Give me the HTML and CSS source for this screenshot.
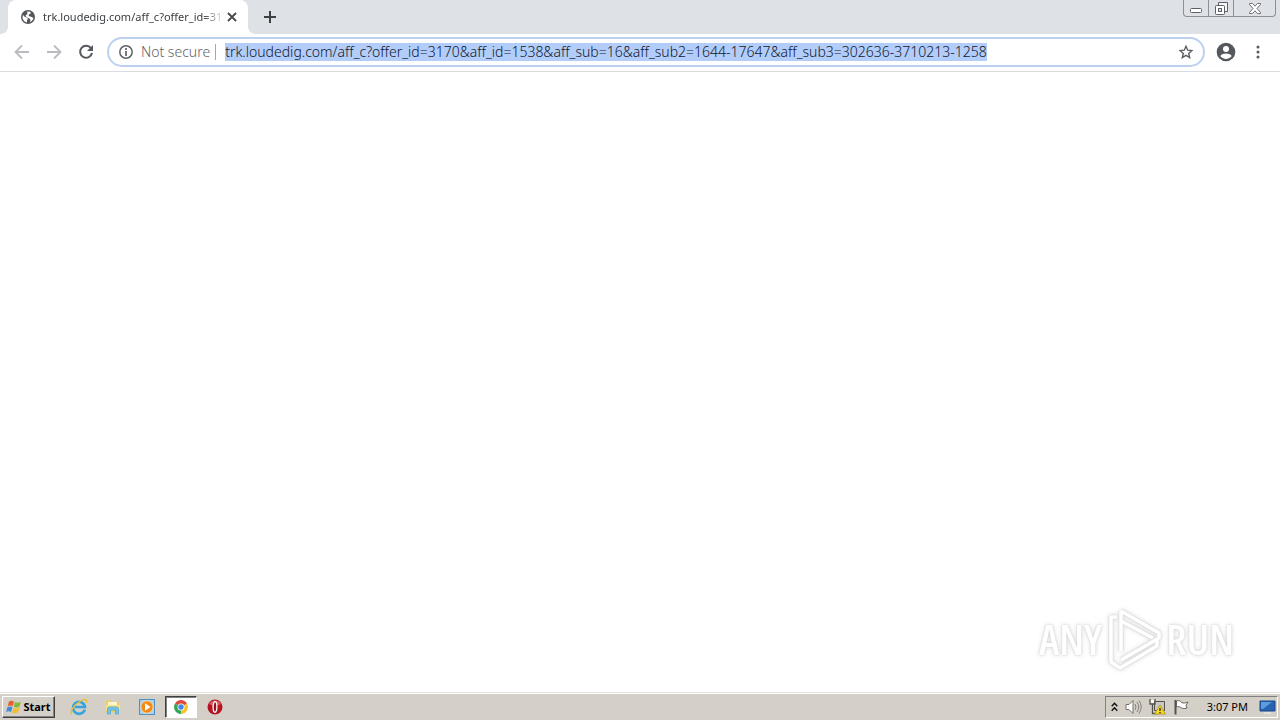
FILE: index.html
```html
<!DOCTYPE html>
<html lang="en">
<head>
<meta charset="utf-8">
<title>trk.loudedig.com</title>
<link rel="stylesheet" href="styles.css">
</head>
<body>
<header class="tabstrip">
  <div class="tab">
    <svg class="tab-icon" width="14" height="14" viewBox="0 0 14 14"><circle cx="7" cy="7" r="7" fill="#53565a"/><path d="M2 5l2 2 2 .5 1 1.500-1 1 0 2.500C3 12 1.500 9.500 1.500 7zM6 1.500l3 .3 1 1.200-2 1.500-.5 1.500 2 .5 3 1.500C12 10 10.500 11.500 9 12l.5-2.500-2-1.500-2-1-1-1.500 2-1.500z" fill="#fff"/></svg>
    <span class="tab-title">trk.loudedig.com/aff_c?offer_id=317</span>
    <button class="tab-close" aria-label="Close tab"><svg width="10" height="10" viewBox="0 0 10 10"><path d="M1 1l8 8M9 1L1 9" stroke="#45484d" stroke-width="1.800"/></svg></button>
  </div>
  <button class="new-tab" aria-label="New tab"><svg width="12" height="12" viewBox="0 0 12 12"><path d="M6 0v12M0 6h12" stroke="#3c4043" stroke-width="2"/></svg></button>
  <div class="window-controls">
    <button class="wc" aria-label="Minimize"><svg width="12" height="5" viewBox="0 0 12 5"><rect x=".5" y=".5" width="11" height="4" rx="1" fill="#fff" stroke="#5d6167"/></svg></button>
    <button class="wc" aria-label="Restore"><svg width="13" height="13" viewBox="0 0 13 13"><path d="M3.500 3.500v-3h9v9h-3" fill="#f4f5f7" stroke="#5d6167"/><rect x=".5" y="3.500" width="9" height="9" rx="1" fill="#fff" stroke="#5d6167"/><rect x="3.500" y="6.500" width="3" height="3" fill="#dee1e6" stroke="#5d6167"/></svg></button>
    <button class="wc wc-close" aria-label="Close"><svg width="12" height="11" viewBox="0 0 12 11"><path d="M.5.5h3L6 3.200 8.500.5h3v1L8 5.500l3.500 4v1h-3L6 7.800 3.500 10.500h-3v-1L4 5.500l-3.500-4z" fill="#fff" stroke="#5d6167" stroke-width=".9"/></svg></button>
  </div>
</header>
<nav class="toolbar">
  <button class="tool" aria-label="Back"><svg width="16" height="16" viewBox="0 0 16 16"><path d="M15 8H2M8 1.500L1.500 8 8 14.500" fill="none" stroke="#b9bbbe" stroke-width="1.800"/></svg></button>
  <button class="tool" aria-label="Forward"><svg width="16" height="16" viewBox="0 0 16 16"><path d="M1 8h13M8 1.500L14.500 8 8 14.500" fill="none" stroke="#b9bbbe" stroke-width="1.800"/></svg></button>
  <button class="tool" aria-label="Reload"><svg width="16" height="16" viewBox="0 0 16 16"><path d="M13 4.200A6 6 0 1 0 14 9" fill="none" stroke="#55585c" stroke-width="2"/><path d="M15 1v6H9z" fill="#55585c"/></svg></button>
  <div class="omnibox">
    <svg class="info" width="14" height="14" viewBox="0 0 14 14"><circle cx="7" cy="7" r="6.200" fill="none" stroke="#5f6368" stroke-width="1.500"/><path d="M7 3v2M7 6v5" stroke="#5f6368" stroke-width="1.700"/></svg>
    <label class="security" for="url">Not secure</label>
    <input class="url" id="url" type="text" spellcheck="false" value="trk.loudedig.com/aff_c?offer_id=3170&amp;aff_id=1538&amp;aff_sub=16&amp;aff_sub2=1644-17647&amp;aff_sub3=302636-3710213-1258">
    <button class="star" aria-label="Bookmark"><svg width="14" height="14" viewBox="0 0 14 14"><path d="M7 1.300l1.700 3.900 4.200.4-3.200 2.800 1 4.200L7 10.400l-3.700 2.200 1-4.200L1.100 5.600l4.200-.4z" fill="none" stroke="#5a5d62" stroke-width="1.400"/></svg></button>
  </div>
  <button class="profile" aria-label="Profile"><svg width="20" height="20" viewBox="0 0 20 20"><circle cx="10" cy="10" r="9.300" fill="#55585d"/><circle cx="10" cy="7" r="3" fill="#fff"/><path d="M4.300 14c1.200-2 3.700-2.600 5.700-2.600s4.500.6 5.700 2.600c-1.200 1.800-3.400 2.900-5.700 2.900S5.500 15.800 4.300 14z" fill="#fff"/></svg></button>
  <button class="more" aria-label="Menu"><svg width="4" height="14" viewBox="0 0 4 14"><g fill="#55585d"><circle cx="2" cy="2" r="1.500"/><circle cx="2" cy="7" r="1.500"/><circle cx="2" cy="12" r="1.500"/></g></svg></button>
</nav>
<main class="page">
  <div class="watermark">
    <span class="wm-word">ANY</span>
    <svg class="wm-logo" width="60" height="66" viewBox="0 0 60 66"><g fill="none" stroke="#dedede" stroke-width="5" stroke-linejoin="round"><path d="M17 5v40M17 5l38 22v5L17 54M17 15l32 17"/><path d="M13 11H7v45l9 6 37-22v-7"/></g><g fill="none" stroke="#fff" stroke-width="3.500" stroke-linejoin="round"><path d="M17 5v40M17 5l38 22v5L17 54M17 15l32 17"/><path d="M13 11H7v45l9 6 37-22v-7"/></g></svg>
    <span class="wm-word">RUN</span>
  </div>
</main>
<footer class="taskbar">
  <button class="start"><svg width="17" height="16" viewBox="0 0 17 16"><path d="M3 2.500c2-1.300 3.500-1 5 0L6.700 7.300c-1.700-1-3.200-1-5 0z" fill="#e8602b"/><path d="M9 3c2 1 4 1 6-.3l-1.400 4.800c-1.800 1.300-3.800 1.300-5.800.2z" fill="#83b93b"/><path d="M1.400 8.300c1.800-1.100 3.400-1 5 0l-1.300 4.800c-1.700-1-3.200-1-5 0z" fill="#3e8bd8"/><path d="M7.500 8.700c2 1.100 4 1 5.900-.3L12 13.200c-1.900 1.300-3.900 1.300-5.800.2z" fill="#f6bd26"/></svg>Start</button>
  <button class="launch" aria-label="Internet Explorer"><svg width="18" height="18" viewBox="0 0 18 18"><path d="M14.800 11.600A6 6 0 1 1 15 9H5" fill="none" stroke="#36a3df" stroke-width="2.600"/><path d="M2 16C-1 15 3 8 9 4c5-3.500 9-3.500 7.300.7" fill="none" stroke="#e9bd35" stroke-width="1.500"/></svg></button>
  <button class="launch" aria-label="Explorer"><svg width="18" height="18" viewBox="0 0 18 18"><path d="M2 3l5-1 1 2h7v10H2z" fill="#efcd62"/><path d="M4 4h9v5H4z" fill="#fff7d2"/><path d="M2 7h14v5H2z" fill="#f9df85"/><path d="M3.500 16v-5q0-2 2-2h7q2 0 2 2v5h-3v-4h-5v4z" fill="#72c4e9" stroke="#4ba2cf" stroke-width=".7"/></svg></button>
  <button class="launch" aria-label="Media Player"><svg width="18" height="18" viewBox="0 0 18 18"><rect x="1.500" y="1.500" width="15" height="15" fill="#a8d0ee" stroke="#4f8fc5"/><circle cx="9" cy="9" r="6.200" fill="#f18b16" stroke="#fff0cf" stroke-width=".7"/><path d="M7 5.200L12.500 9 7 12.800z" fill="#fff"/></svg></button>
  <button class="launch active" aria-label="Chrome"><svg width="14" height="14" viewBox="0 0 14 14"><path d="M7 7L1 3.500A7 7 0 0 1 13 3.500z" fill="#df4937"/><path d="M7 7l6-3.500A7 7 0 0 1 7 14z" fill="#f5c62b"/><path d="M7 7v7A7 7 0 0 1 1 3.500z" fill="#35a455"/><circle cx="7" cy="7" r="3.500" fill="#fff"/><circle cx="7" cy="7" r="2.700" fill="#4385e8"/></svg></button>
  <button class="launch" aria-label="Opera"><svg width="16" height="16" viewBox="0 0 16 16"><circle cx="8" cy="8" r="7.500" fill="#b51521"/><path d="M2 5a7 7 0 0 1 12 0q-6 3-12 0" fill="#d85c62"/><ellipse cx="8" cy="8" rx="1.900" ry="5.300" fill="#981019" stroke="#fff" stroke-width="1.300"/></svg></button>
  <div class="tray">
    <svg width="7" height="10" viewBox="0 0 7 10"><path d="M.7 4.300l2.800-3 2.800 3M.7 8.800l2.800-3 2.800 3" fill="none" stroke="#111" stroke-width="1.400"/></svg>
    <svg width="17" height="16" viewBox="0 0 17 16"><path d="M1 5.500h3l4-4v13l-4-4H1z" fill="#fff" stroke="#76736e"/><path d="M10 5q2 3 0 6M12 3q3.500 5 0 10M14 1.500q4.500 6.500 0 13" fill="none" stroke="#85817b"/></svg>
    <svg width="17" height="17" viewBox="0 0 17 17"><path d="M5.500 3.500h10v9h-10z" fill="#c9c9c4" stroke="#55534e"/><path d="M1 1v5h5V1M3.500 6v9.500h6" fill="none" stroke="#55534e" stroke-width="1.300"/><path d="M2 2h3v3H2z" fill="#fff"/><path d="M11 7l5.500 9h-11z" fill="#f8da24" stroke="#a78a0a" stroke-width=".7"/><path d="M11 10v3M11 14v1.200" stroke="#222" stroke-width="1.300"/></svg>
    <svg width="17" height="16" viewBox="0 0 17 16"><path d="M2.500 1v14.500" stroke="#55534e" stroke-width="2"/><path d="M3.500 2c3-1 4 0 5 1.500 2 1 4 .5 6.500-.5l-2 3.500 1 2.500c-3 1-5 .5-6.500-.7-1-.8-2-.8-4-.3z" fill="#fff" stroke="#66635e"/></svg>
    <time class="clock">3:07 PM</time>
    <svg width="17" height="14" viewBox="0 0 17 14"><path d="M1 1h15v10H1z" fill="#2862b2" stroke="#174889"/><path d="M2 2h11L4 9H2z" fill="#5c9cda"/><path d="M5 13h7" stroke="#f2f2f2"/></svg>
  </div>
</footer>
<script src="app.js"></script>
</body>
</html>
```
FILE: app.js
```js
const url = document.getElementById("url");
url.focus();
url.select();
```
FILE: styles.css
```css
* { box-sizing: border-box; }
body { margin: 0; min-height: 100vh; display: flex; flex-direction: column; background: #fff; font-family: "Noto Sans", sans-serif; color: #202124; }
button { border: 0; padding: 0; background: none; color: inherit; font: inherit; display: flex; align-items: center; justify-content: center; }
svg { display: block; flex: none; }
.tabstrip { display: flex; align-items: flex-start; height: 34px; background: #dee1e6; }
.tab { display: flex; align-items: center; width: 240px; height: 34px; margin-left: 8px; padding: 0 9px 0 13px; background: #fff; border-radius: 8px 8px 0 0; position: relative; }
.tab::before, .tab::after { content: ""; position: absolute; bottom: 0; width: 8px; height: 8px; }
.tab::before { left: -8px; background: radial-gradient(circle at 0 0, transparent 8px, #fff 8px); }
.tab::after { right: -8px; background: radial-gradient(circle at 100% 0, transparent 8px, #fff 8px); }
.tab-title { flex: 1; min-width: 0; margin-left: 8px; overflow: hidden; white-space: nowrap; color: #3c4043; font-size: 11px; line-height: 18px; -webkit-mask-image: linear-gradient(90deg, #000 88%, transparent); mask-image: linear-gradient(90deg, #000 88%, transparent); }
.tab-close { width: 14px; height: 14px; }
.new-tab { width: 28px; height: 34px; margin-left: 8px; }
.window-controls { display: flex; height: 17px; margin: 0 4px 0 auto; border: 1px solid #8b9099; border-top: 0; border-radius: 0 0 4px 4px; }
.wc { width: 25px; border-right: 1px solid #8b9099; }
.wc:first-child { padding-top: 4px; }
.wc-close { width: 41px; border-right: 0; }
.toolbar { display: flex; align-items: center; height: 38px; padding: 0 12px 2px 14px; border-bottom: 1px solid #d9dce0; }
.tool { width: 16px; height: 28px; margin-right: 16px; }
.tool:nth-child(3) { margin-right: 13px; }
.omnibox { display: flex; align-items: center; flex: 1; min-width: 0; height: 30px; padding: 0 10px; border: 2px solid #bcd0f0; border-radius: 15px; }
.security { margin-left: 8px; padding-right: 5px; border-right: 1px solid #a5a8ac; color: #5f6368; font-size: 14px; font-weight: 300; line-height: 16px; white-space: nowrap; }
.url { flex: 1; min-width: 0; height: 18px; margin-left: 9px; padding: 0; border: 0; outline: 0; background: transparent; color: #202124; font: 300 14px/18px "Noto Sans", sans-serif; }
.url::selection { background: #b3cdfa; color: #10182c; }
.profile { width: 20px; height: 28px; margin-left: 11px; }
.more { width: 20px; height: 28px; margin-left: 12px; }
.page { flex: 1; display: flex; align-items: flex-end; justify-content: flex-end; padding: 0 46px 20px 20px; }
.watermark { display: flex; align-items: center; gap: 2px; filter: drop-shadow(0 0 2px #ddd); }
.wm-word { color: #fff; font: 600 42px/60px "Open Sans", sans-serif; font-stretch: condensed; text-shadow: 0 0 2px #ccc; }
.taskbar { display: flex; align-items: center; height: 28px; padding: 1px 2px; background: #d4d0c8; border-top: 1px solid #e4e1dc; box-shadow: inset 0 1px #fff; }
.start { width: 53px; height: 22px; margin-right: 8px; border: 1px solid; border-color: #fff #404040 #404040 #fff; box-shadow: inset -1px -1px #808080; font: bold 11px/16px "Noto Sans", sans-serif; color: #000; }
.launch { width: 32px; height: 22px; margin-right: 2px; }
.active { background: #fff; border: 1px solid; border-color: #404040 #fff #fff #404040; box-shadow: inset 1px 1px #808080; }
.tray { display: flex; align-items: center; gap: 7px; height: 22px; margin-left: auto; padding: 0 1px 0 5px; border: 1px solid; border-color: #808080 #fff #fff #808080; }
.clock { margin: 0 4px 0 10px; font-size: 11px; line-height: 16px; color: #000; }
```
